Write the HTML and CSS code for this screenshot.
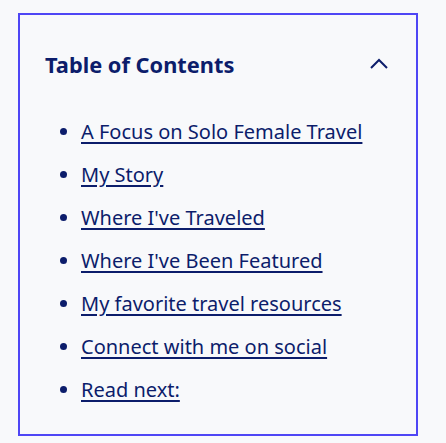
FILE: index.html
```html
<!DOCTYPE html>
<html>
<head>
<meta charset="utf-8">
<link rel="stylesheet" href="styles.css">
</head>
<body>
<nav class="toc">
  <div class="toc-header">
    <span class="toc-title">Table of Contents</span>
    <svg class="chevron" width="20" height="12" viewBox="0 0 20 12"><path d="M2 10 L10 2 L18 10" fill="none" stroke="#0c1d6b" stroke-width="2"/></svg>
  </div>
  <ul class="toc-list">
    <li><a href="#">A Focus on Solo Female Travel</a></li>
    <li><a href="#">My Story</a></li>
    <li><a href="#">Where I've Traveled</a></li>
    <li><a href="#">Where I've Been Featured</a></li>
    <li><a href="#">My favorite travel resources</a></li>
    <li><a href="#">Connect with me on social</a></li>
    <li><a href="#">Read next:</a></li>
  </ul>
</nav>
</body>
</html>
```
FILE: styles.css
```css
html, body {
  margin: 0;
  background: #f8f9fb;
}
body {
  padding: 13px 0 0 18px;
  font-family: "Noto Sans", "Open Sans", sans-serif;
  color: #0c1d6b;
}
.toc {
  box-sizing: border-box;
  width: 400px;
  height: 423px;
  border: 2px solid #4f46f5;
  padding: 0 27px 0 25px;
}
.toc-header {
  display: flex;
  justify-content: space-between;
  align-items: center;
  height: 98px;
}
.toc-title {
  font-weight: 700;
  font-size: 21.8px;
}
.toc-list {
  margin: 0;
  padding: 5px 0 0 36px;
  font-size: 20px;
}
.toc-list li {
  line-height: 27px;
  margin-bottom: 16px;
}
.toc-list a {
  color: #0c1d6b;
  text-decoration: underline;
  text-underline-offset: 3px;
}
```
